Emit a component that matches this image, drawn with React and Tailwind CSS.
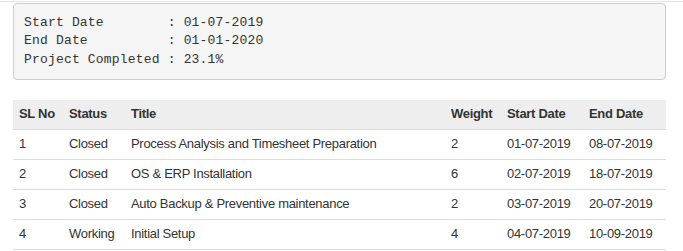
const summary = [
  ["Start Date", "01-07-2019"],
  ["End Date", "01-01-2020"],
  ["Project Completed", "23.1%"],
];

const tasks = [
  { no: 1, status: "Closed", title: "Process Analysis and Timesheet Preparation", weight: 2, start: "01-07-2019", end: "08-07-2019" },
  { no: 2, status: "Closed", title: "OS & ERP Installation", weight: 6, start: "02-07-2019", end: "18-07-2019" },
  { no: 3, status: "Closed", title: "Auto Backup & Preventive maintenance", weight: 2, start: "03-07-2019", end: "20-07-2019" },
  { no: 4, status: "Working", title: "Initial Setup", weight: 4, start: "04-07-2019", end: "10-09-2019" },
];

export default function App() {
  return (
    <div className="min-h-[251px] bg-white pt-px font-['Liberation_Sans',Arial,sans-serif] text-[13px] tracking-[-0.3px] text-[#333]">
      <div className="border-t border-[#e3e3e3]" />
      <pre className="mt-px ml-[13px] w-[653px] rounded border border-[#ccc] bg-[#f5f5f5] px-[10px] py-[9.5px] font-['Liberation_Mono',monospace] text-[13px] leading-[18.6px] tracking-[0.18px] text-[#333]">
        {summary.map(([label, value]) => `${label.padEnd(17)} : ${value}`).join("\n")}
      </pre>
      <table className="mt-[20px] ml-[13px] w-[653px] table-fixed border-collapse text-left">
        <colgroup>
          <col className="w-[50px]" />
          <col className="w-[62px]" />
          <col className="w-[320px]" />
          <col className="w-[56px]" />
          <col className="w-[82px]" />
          <col className="w-[83px]" />
        </colgroup>
        <thead>
          <tr className="h-[30px] border-b border-[#ddd] bg-[#eee]">
            <th className="px-[6px] pb-[2px] font-bold">SL No</th>
            <th className="px-[6px] pb-[2px] font-bold">Status</th>
            <th className="px-[6px] pb-[2px] font-bold">Title</th>
            <th className="px-[6px] pb-[2px] font-bold">Weight</th>
            <th className="px-[6px] pb-[2px] font-bold">Start Date</th>
            <th className="px-[6px] pb-[2px] font-bold">End Date</th>
          </tr>
        </thead>
        <tbody>
          {tasks.map((t) => (
            <tr key={t.no} className="h-[30px] border-b border-[#ddd]">
              <td className="px-[6px] pb-[3px]">{t.no}</td>
              <td className="px-[6px] pb-[3px]">{t.status}</td>
              <td className="px-[6px] pb-[3px] whitespace-nowrap">{t.title}</td>
              <td className="px-[6px] pb-[3px]">{t.weight}</td>
              <td className="px-[6px] pb-[3px]">{t.start}</td>
              <td className="px-[6px] pb-[3px]">{t.end}</td>
            </tr>
          ))}
        </tbody>
      </table>
    </div>
  );
}
